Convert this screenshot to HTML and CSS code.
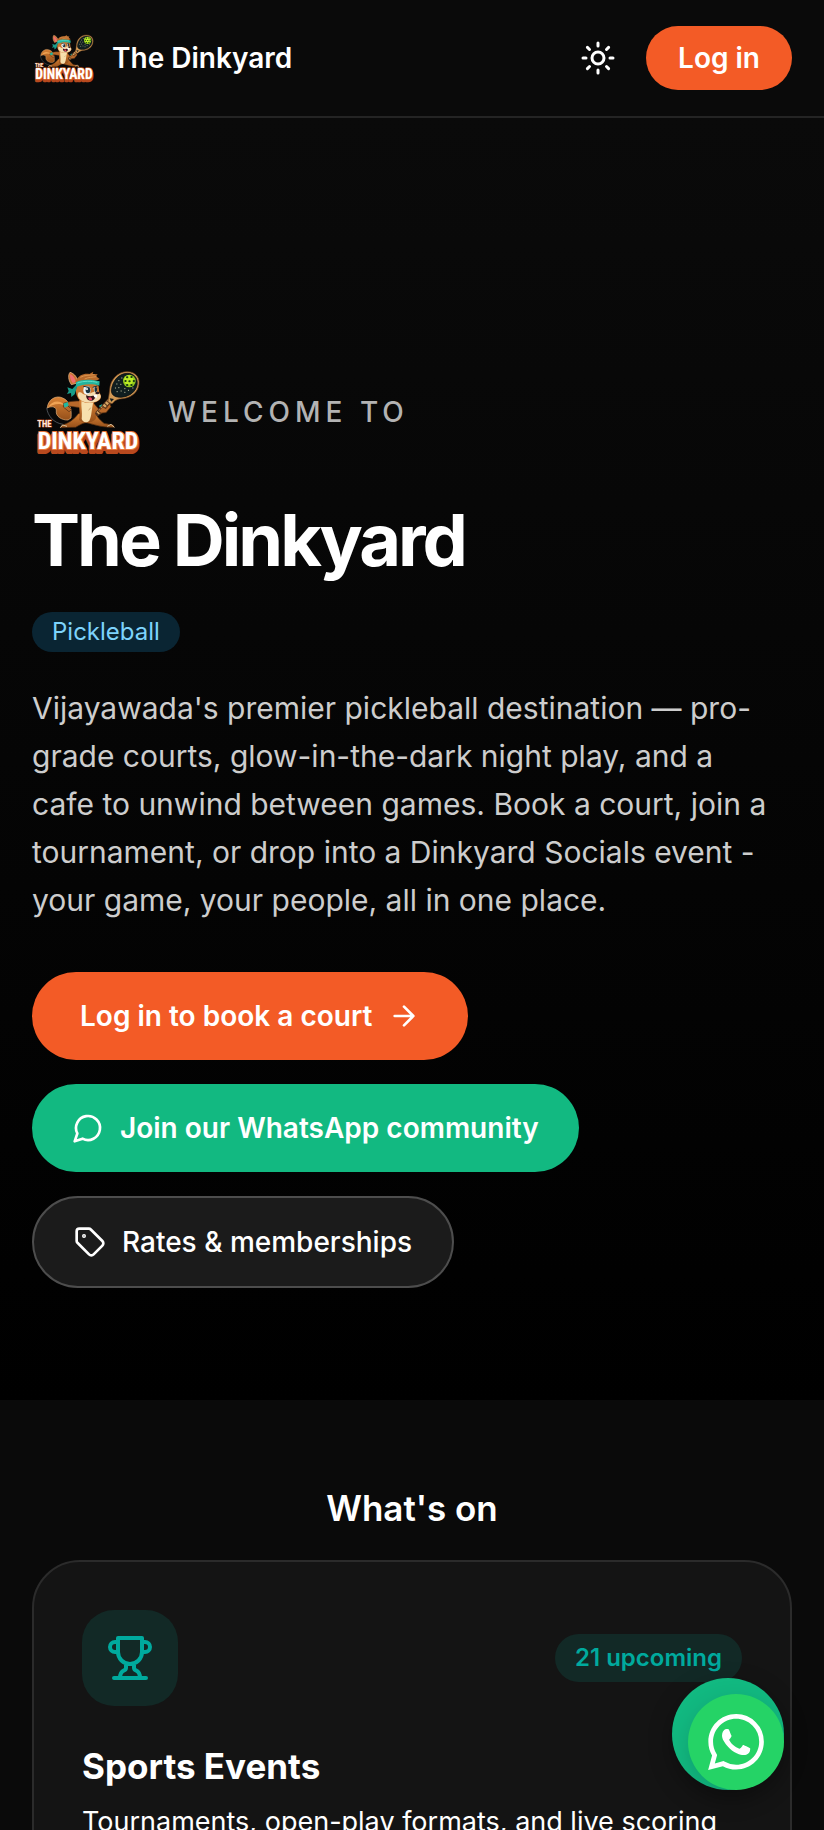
FILE: index.html
```html
<!DOCTYPE html>
<html lang="en">
<head>
  <meta charset="UTF-8" />
  <meta name="viewport" content="width=device-width, initial-scale=1.0"/>
  <title>The Dinkyard</title>
  <link rel="stylesheet" href="styles.css">
</head>
<body>
  <header class="topbar">
    <a class="brand" href="#">
      <!-- Mascot, reused by the hero -->
      <svg class="brand-logo" viewBox="6 -27 336 336" aria-hidden="true">
        <defs>
          <linearGradient id="fur" x1="0" y1="0" x2="0" y2="1">
            <stop offset="0" stop-color="#d98235"/>
            <stop offset="1" stop-color="#96501a"/>
          </linearGradient>
        </defs>
        <g id="mascot">
          <!-- tail -->
          <path d="M114 165 C96 166 76 154 79 138 C80 127 67 121 52 129 C53 104 78 89 98 99 C119 107 126 133 123 159 Z" fill="url(#fur)" stroke="#e9b27a" stroke-width="2"/>
          <path d="M54 127 C67 105 91 104 106 122 C88 113 70 117 54 127 Z" fill="#f0a354"/>
          <path d="M50 128 C53 153 71 174 99 178" fill="none" stroke="#69717a" stroke-width="2"/>
          <!-- legs -->
          <path d="M145 146 C134 161 117 175 96 180 L91 188 L137 187 C151 179 158 174 168 173 C187 176 210 188 253 187 L250 180 L222 175 C207 162 202 155 195 144 Z" fill="url(#fur)" stroke="#4b280e" stroke-width="2"/>
          <path d="M91 188 L98 180 L111 184 M253 187 L243 178 L232 184" fill="none" stroke="#d9c39d" stroke-width="3"/>
          <!-- arms -->
          <path d="M151 108 C133 107 118 109 101 115 L100 126 L117 140 L125 134 L114 123 L151 128 Z" fill="#b9692a" stroke="#4b280e" stroke-width="2"/>
          <path d="M188 111 L206 132 L220 121 L231 123 L236 111 L242 110 L239 128 L211 148 L188 135 Z" fill="#b9692a" stroke="#4b280e" stroke-width="2"/>
          <path d="M100 116 L113 111 L116 122 L104 128 Z M207 122 L216 118 L222 127 L213 133 Z" fill="#20b7a0"/>
          <!-- body -->
          <path d="M148 105 C161 98 181 100 190 109 C194 128 204 150 197 162 C187 175 159 176 147 165 C151 143 146 125 148 105 Z" fill="url(#fur)"/>
          <path d="M155 106 C169 117 182 114 191 109 C184 131 186 154 178 167 C169 175 158 172 155 162 C158 140 152 124 155 106 Z" fill="#f7e0ad"/>
          <path d="M176 136 L182 128" stroke="#b68a59" stroke-width="2"/>
          <!-- ears and hair -->
          <path d="M124 59 C114 44 114 30 120 22 C133 25 144 39 143 54 Z" fill="#c87432" stroke="#f0bd91" stroke-width="2"/>
          <path d="M128 54 C120 43 119 33 121 27 C132 33 136 43 137 51 Z" fill="#f16d70"/>
          <path d="M137 49 C144 31 163 24 178 27 L190 20 L188 27 L203 28 L198 34 L209 42 C202 47 190 48 181 48 C164 46 149 50 137 53 Z" fill="#b76a2b"/>
          <path d="M151 37 C163 30 177 31 194 29 M164 42 C175 36 187 37 200 35" stroke="#edab61" stroke-width="2" fill="none"/>
          <!-- head -->
          <path d="M141 62 C157 52 197 51 206 64 L208 83 C216 91 214 103 204 108 C187 119 157 114 145 101 C137 88 136 73 141 62 Z" fill="#c9752f"/>
          <path d="M146 82 C155 79 157 88 166 89 C176 91 185 79 196 80 C210 83 217 93 209 102 C195 118 160 116 148 101 C143 94 142 88 146 82 Z" fill="#f5dcae"/>
          <ellipse cx="171" cy="76" rx="11" ry="13" fill="#eff7fa"/>
          <ellipse cx="174" cy="76" rx="7" ry="9" fill="#18313d"/>
          <circle cx="171" cy="72" r="3" fill="#ffffff"/>
          <path d="M190 66 C198 65 202 70 201 80 L193 80 Z" fill="#eff7fa"/>
          <path d="M195 68 L200 69 L199 79 L195 79 Z M160 64 L179 67 M188 67 L202 63" fill="#18313d" stroke="#18313d" stroke-width="3"/>
          <ellipse cx="202" cy="84" rx="6" ry="4" fill="#2e1820"/>
          <path d="M168 91 C180 96 187 93 197 91 C196 106 185 111 174 105 C169 101 169 96 168 91 Z" fill="#35131a"/>
          <path d="M174 98 C182 94 187 98 186 104 C182 108 176 105 174 98 Z" fill="#ed4160"/>
          <path d="M190 89 L202 89 L200 99 L193 97 Z" fill="#ffffff"/>
          <!-- headband -->
          <path d="M138 52 C159 41 188 44 209 49 L208 62 C186 55 158 57 138 67 Z" fill="#24b59e"/>
          <path d="M138 60 L127 72 L112 67 L116 78 L111 87 L123 84 L124 96 L134 88 L141 67 Z" fill="#189c8a"/>
          <path d="M142 54 C162 47 184 48 202 52" fill="none" stroke="#62dfc8" stroke-width="3"/>
          <!-- paddle -->
          <path d="M240 105 L203 145" stroke="#53331e" stroke-width="15" stroke-linecap="round"/>
          <path d="M240 105 L203 145" stroke="#d7a563" stroke-width="10" stroke-dasharray="7 3"/>
          <path d="M234 111 L239 76 C240 43 264 20 291 20 C320 20 333 42 325 66 C319 86 300 99 276 101 C263 102 257 104 246 116 Z" fill="#d29a55" stroke="#71431f" stroke-width="2"/>
          <path d="M244 78 C246 46 268 25 292 25 C317 25 326 46 320 65 C312 86 294 95 273 97 C259 97 245 93 244 78 Z" fill="#101e20" stroke="#050808" stroke-width="2"/>
          <path d="M239 100 L252 102 L244 110 Z" fill="#101e20"/>
          <path d="M266 47 h1 M260 57 h1 M272 58 h1 M266 68 h1 M256 69 h1 M261 80 h1 M273 78 h1 M284 71 h1 M284 82 h1 M295 76 h1 M275 39 h1 M308 69 h1" stroke="#b9bb98" stroke-width="3" stroke-linecap="round"/>
          <circle cx="298" cy="48" r="19" fill="#92c91c"/>
          <circle cx="296" cy="45" r="14" fill="#bded25"/>
          <path d="M291 37 h1 M304 36 h1 M286 48 h1 M298 49 h1 M311 48 h1 M291 60 h1 M304 60 h1" stroke="#1a3d15" stroke-width="6" stroke-linecap="round"/>
          <path d="M204 139 L219 126 L228 131 L239 116 L243 125 L228 143 L214 144 Z" fill="#b9692a" stroke="#4b280e" stroke-width="2"/>
          <!-- wordmark, a dark copy below the white one gives it depth -->
          <text class="mark-the" x="43" y="186" text-anchor="middle">THE</text>
          <g class="mark-name">
            <text class="mark-depth" x="174" y="260" text-anchor="middle" aria-hidden="true">DINKYARD</text>
            <text class="mark-face" x="174" y="253" text-anchor="middle">DINKYARD</text>
          </g>
        </g>
      </svg>
      <span>The Dinkyard</span>
    </a>
    <div class="topbar-actions">
      <button class="btn-theme" type="button" aria-label="Toggle theme">
        <svg class="icon" viewBox="0 0 24 24">
          <circle cx="12" cy="12" r="4"/>
          <path d="M12 2v2M12 20v2M4.93 4.93l1.41 1.41M17.66 17.66l1.41 1.41M2 12h2M20 12h2M6.34 17.66l-1.41 1.41M19.07 4.93l-1.41 1.41"/>
        </svg>
      </button>
      <button class="btn-login" type="button">Log in</button>
    </div>
  </header>

  <main>
    <section class="hero">
      <div class="welcome">
        <svg class="hero-logo" viewBox="6 -27 336 336" role="img" aria-label="The Dinkyard logo"><use href="#mascot"/></svg>
        <p>WELCOME TO</p>
      </div>
      <h1>The Dinkyard</h1>
      <span class="sport-tag">Pickleball</span>
      <p class="intro">Vijayawada's premier pickleball destination — pro-grade courts, glow-in-the-dark night play, and a cafe to unwind between games. Book a court, join a tournament, or drop into a Dinkyard Socials event - your game, your people, all in one place.</p>
      <div class="hero-actions">
        <a class="btn btn-book" href="#">
          Log in to book a court
          <svg class="icon" viewBox="0 0 24 24"><path d="M5 12h14M12 5l7 7-7 7"/></svg>
        </a>
        <a class="btn btn-community" href="#">
          <svg class="icon" viewBox="0 0 24 24"><path d="M7.9 20A9 9 0 1 0 4 16.1L2 22Z"/></svg>
          Join our WhatsApp community
        </a>
        <a class="btn btn-rates" href="#">
          <svg class="icon" viewBox="0 0 24 24">
            <path d="M12.586 2.586A2 2 0 0 0 11.172 2H4a2 2 0 0 0-2 2v7.172a2 2 0 0 0 .586 1.414l8.704 8.704a2.426 2.426 0 0 0 3.42 0l6.58-6.58a2.426 2.426 0 0 0 0-3.42z"/>
            <circle cx="7.5" cy="7.5" r="0.5" fill="currentColor"/>
          </svg>
          Rates &amp; memberships
        </a>
      </div>
    </section>

    <section class="whats-on">
      <h2>What's on</h2>
      <article class="event-card">
        <div class="card-top">
          <div class="card-icon">
            <svg class="icon" viewBox="0 0 24 24">
              <path d="M6 9H4.5a2.5 2.5 0 0 1 0-5H6M18 9h1.5a2.5 2.5 0 0 0 0-5H18M4 22h16M10 14.66V17c0 .55-.47.98-.97 1.21C7.85 18.75 7 20.24 7 22M14 14.66V17c0 .55.47.98.97 1.21C16.15 18.75 17 20.24 17 22M18 2H6v7a6 6 0 0 0 12 0V2Z"/>
            </svg>
          </div>
          <span class="count-tag">21 upcoming</span>
        </div>
        <h3>Sports Events</h3>
        <p>Tournaments, open-play formats, and live scoring</p>
      </article>
    </section>
  </main>

  <div class="chat-float">
    <a class="chat-link" href="#" aria-label="Chat on WhatsApp">
      <svg viewBox="0 0 24 24">
        <path fill="currentColor" d="M17.472 14.382c-.297-.149-1.758-.867-2.03-.967-.273-.099-.471-.148-.67.15-.197.297-.767.966-.94 1.164-.173.199-.347.223-.644.075-.297-.15-1.255-.463-2.39-1.475-.883-.788-1.48-1.761-1.653-2.059-.173-.297-.018-.458.13-.606.134-.133.298-.347.446-.52.149-.174.198-.298.298-.497.099-.198.05-.371-.025-.52-.075-.149-.669-1.612-.916-2.207-.242-.579-.487-.5-.669-.51-.173-.008-.371-.01-.57-.01-.198 0-.52.074-.792.372-.272.297-1.04 1.016-1.04 2.479 0 1.462 1.065 2.875 1.213 3.074.149.198 2.096 3.2 5.077 4.487.709.306 1.262.489 1.694.625.712.227 1.36.195 1.871.118.571-.085 1.758-.719 2.006-1.413.248-.694.248-1.289.173-1.413-.074-.124-.272-.198-.57-.347m-5.421 7.403h-.004a9.87 9.87 0 0 1-5.031-1.378l-.361-.214-3.741.982.998-3.648-.235-.374a9.86 9.86 0 0 1-1.51-5.26c.001-5.45 4.436-9.884 9.888-9.884 2.64 0 5.122 1.03 6.988 2.898a9.825 9.825 0 0 1 2.893 6.994c-.003 5.45-4.437 9.884-9.885 9.884m8.413-18.297A11.815 11.815 0 0 0 12.05 0C5.495 0 .16 5.335.157 11.892c0 2.096.547 4.142 1.588 5.945L.057 24l6.305-1.654a11.882 11.882 0 0 0 5.683 1.448h.005c6.554 0 11.89-5.335 11.893-11.893a11.821 11.821 0 0 0-3.48-8.413Z"/>
      </svg>
    </a>
  </div>
</body>
</html>
```
FILE: styles.css
```css
* {
  box-sizing: border-box;
}

body {
  font-family: 'Inter', 'Liberation Sans', sans-serif;
  font-size: 28px;
  background: #0a0a0a;
  color: #fff;
  margin: 0;
}

h1, h2, h3, p {
  margin: 0;
}

a {
  color: inherit;
  text-decoration: none;
}

button {
  font: inherit;
  color: inherit;
  border: none;
  cursor: pointer;
}

.icon {
  flex-shrink: 0;
  fill: none;
  stroke: currentColor;
  stroke-width: 2;
  stroke-linecap: round;
  stroke-linejoin: round;
}

/* Logo wordmark */
.mark-the,
.mark-name {
  font-family: 'Liberation Sans Narrow', 'Roboto Condensed', 'Roboto', sans-serif;
  font-weight: 700;
  letter-spacing: 0;
  paint-order: stroke;
  stroke-linejoin: round;
}

.mark-the {
  font-size: 26px;
  fill: #ffe9dc;
  stroke: #a6431d;
  stroke-width: 3px;
}

.mark-name {
  font-size: 72px;
}

.mark-depth {
  fill: #b8491e;
  stroke: #b8491e;
  stroke-width: 12px;
}

.mark-face {
  fill: #fff;
  stroke: #e8793f;
  stroke-width: 6px;
}

/* Header */
.topbar {
  display: flex;
  align-items: center;
  justify-content: space-between;
  padding: 26px 32px;
  border-bottom: 2px solid #242424;
}

.brand {
  display: flex;
  align-items: center;
  gap: 16px;
  font-weight: 600;
}

.brand-logo {
  width: 64px;
  height: 64px;
}

.topbar-actions {
  display: flex;
  align-items: center;
  gap: 16px;
}

.btn-theme {
  display: flex;
  align-items: center;
  justify-content: center;
  width: 64px;
  height: 64px;
  padding: 0;
  background: transparent;
}

.btn-theme .icon {
  width: 36px;
  height: 36px;
}

.btn-login {
  height: 64px;
  padding: 0 32px;
  font-weight: 600;
  background: #f35b26;
  border-radius: 32px;
}

/* Hero */
.hero {
  padding: 238px 32px 112px;
  background: linear-gradient(#0a0a0a, #000);
}

.welcome {
  display: flex;
  align-items: center;
  gap: 24px;
  font-weight: 500;
  letter-spacing: 5px;
  color: #b3b3b3;
}

.hero-logo {
  width: 112px;
  height: 112px;
}

h1 {
  margin: 32px 0;
  font-size: 72px;
  font-weight: 700;
  line-height: 80px;
  letter-spacing: -3px;
}

.sport-tag {
  display: block;
  width: fit-content;
  padding: 0 20px;
  font-size: 24px;
  line-height: 40px;
  color: #7dd3fc;
  background: #0a2533;
  border-radius: 20px;
}

.intro {
  max-width: 748px;
  margin-top: 32px;
  font-size: 30px;
  line-height: 48px;
  color: #cdcdcd;
}

.hero-actions {
  display: flex;
  flex-direction: column;
  align-items: flex-start;
  gap: 24px;
  margin-top: 48px;
}

.btn {
  display: flex;
  align-items: center;
  gap: 16px;
  min-height: 88px;
  padding: 0 40px;
  font-weight: 600;
  border-radius: 46px;
}

.btn .icon {
  width: 32px;
  height: 32px;
}

.btn-book {
  padding: 0 48px;
  background: #f35b26;
}

.btn-community {
  background: #12b981;
}

.btn-rates {
  min-height: 92px;
  font-weight: 500;
  background: #1b1b1b;
  border: 2px solid #4d4d4d;
}

/* What's on */
.whats-on {
  padding: 80px 32px;
}

h2 {
  margin-bottom: 24px;
  font-size: 35px;
  font-weight: 600;
  line-height: 56px;
  text-align: center;
}

.event-card {
  padding: 48px;
  background: #141414;
  border: 2px solid #2b2b2b;
  border-radius: 48px;
}

.card-top {
  display: flex;
  align-items: center;
  justify-content: space-between;
}

.card-icon {
  display: flex;
  align-items: center;
  justify-content: center;
  width: 96px;
  height: 96px;
  color: #00aa9e;
  background: #122926;
  border-radius: 32px;
}

.card-icon .icon {
  width: 48px;
  height: 48px;
}

.count-tag {
  padding: 0 20px;
  font-size: 24px;
  font-weight: 600;
  line-height: 48px;
  color: #00aa9e;
  background: #122926;
  border-radius: 24px;
}

h3 {
  margin: 32px 0 8px;
  font-size: 35px;
  font-weight: 700;
  line-height: 56px;
}

.event-card p {
  font-size: 27px;
  line-height: 40px;
}

/* Floating WhatsApp button */
.chat-float {
  position: fixed;
  right: 40px;
  bottom: 40px;
  display: flex;
  align-items: flex-end;
  justify-content: flex-end;
  width: 112px;
  height: 112px;
  background: #12b981;
  border-radius: 50%;
  box-shadow: 0 8px 24px rgba(0,0,0,0.3);
}

.chat-link {
  display: flex;
  align-items: center;
  justify-content: center;
  width: 96px;
  height: 96px;
  background: #25d366;
  border-radius: 50%;
  box-shadow: 0 8px 24px rgba(0,0,0,0.15);
}

.chat-link svg {
  width: 56px;
  height: 56px;
}
```
